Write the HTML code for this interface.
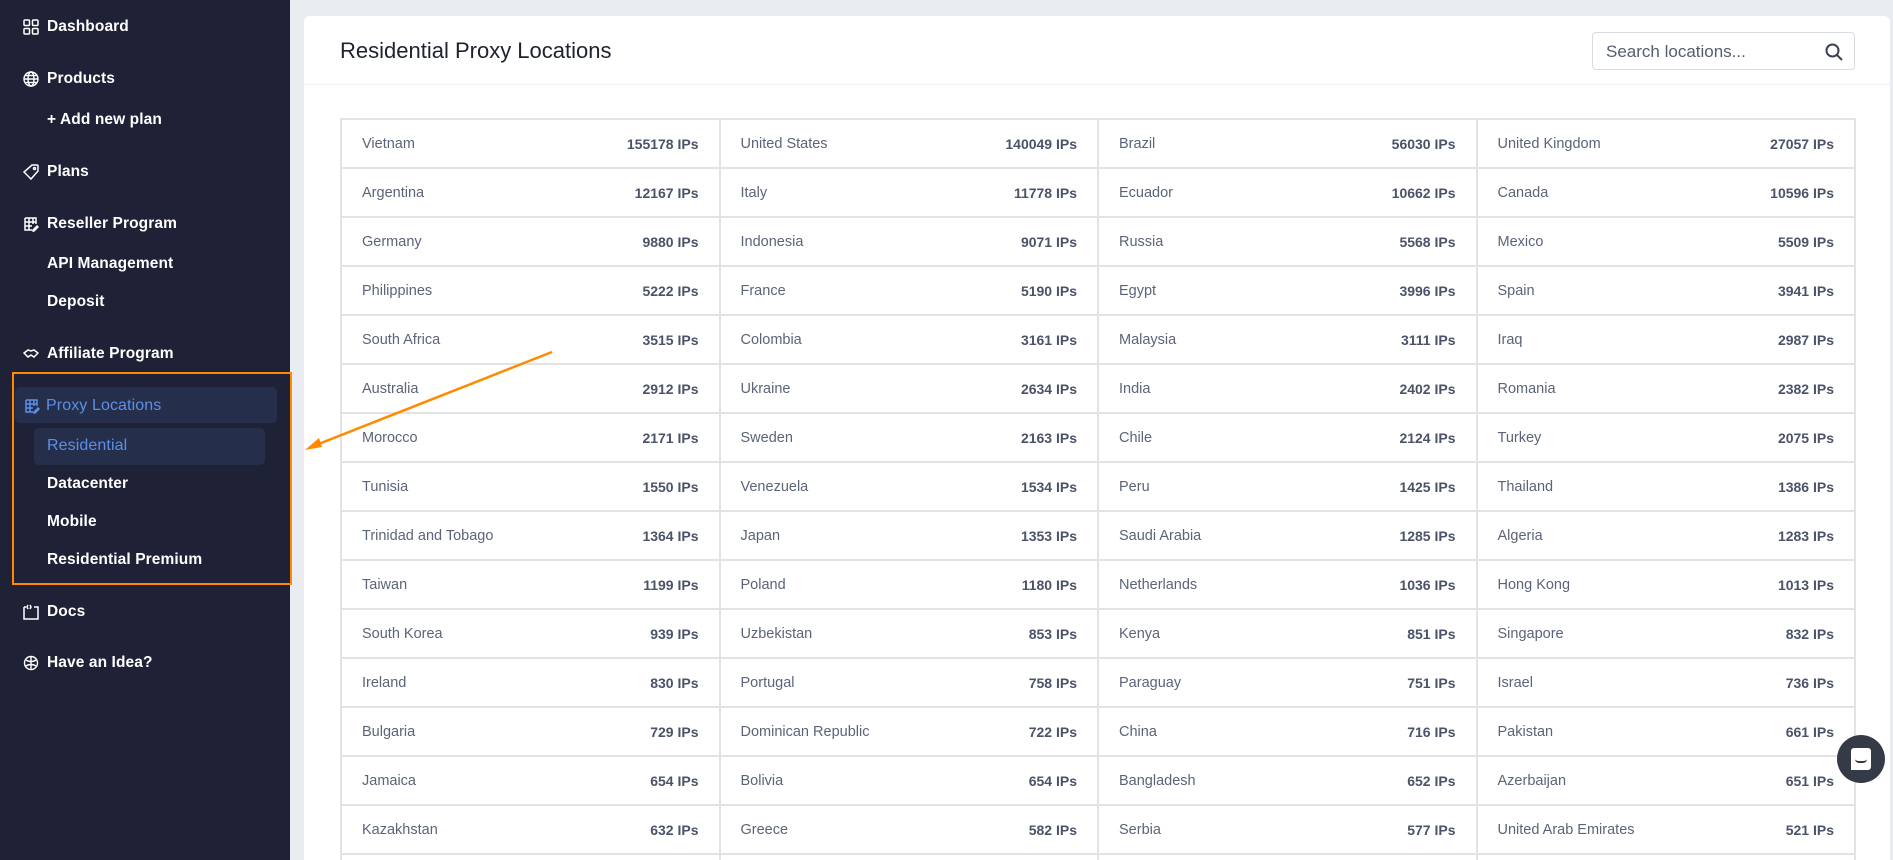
<!DOCTYPE html>
<html style="width:1893px;height:860px;overflow:hidden"><head><meta charset="utf-8"><style>
*{margin:0;padding:0;box-sizing:border-box}
body{width:1893px;height:860px;overflow:hidden;background:#e9ecf0;font-family:"Liberation Sans",sans-serif;position:relative}
.side{position:absolute;left:0;top:0;width:290px;height:860px;background:#1f2236}
.it{position:absolute;left:47px;color:#fff;font-size:15.5px;font-weight:bold;letter-spacing:0.1px;line-height:20px}
.ic{position:absolute;left:23px;width:16px;height:16px}
.card{position:absolute;left:304px;top:16px;width:1586px;height:844px;background:#fff;border-radius:6px 6px 0 0;overflow:hidden}
.hdr{position:absolute;left:0;top:0;width:100%;height:69px;border-bottom:1px solid #eef0f2}
.title{position:absolute;left:36px;top:22px;font-size:22px;color:#1e2230}
.search{position:absolute;left:1288px;top:16px;width:263px;height:38px;border:1px solid #d9dce1;border-radius:4px;font-size:17px;color:#555d6e;padding:9px 0 0 13px}
table{position:absolute;left:36px;top:102px;border-collapse:collapse;table-layout:fixed;width:1514px}
td{border:2px solid #e3e3e3;height:49px;width:378.5px;padding:0 20px;font-size:14.5px;color:#5b6478}
td div{display:flex;justify-content:space-between;align-items:center}
td b{color:#4a5368;font-size:14px}
</style></head><body>
<div class="side">
<svg class="ic" style="top:19px" viewBox="0 0 16 16" fill="none" stroke="#fff" stroke-width="1.5"><rect x="1" y="1" width="5.5" height="5.5" rx="1"/><rect x="9.5" y="1" width="5.5" height="5.5" rx="1"/><rect x="1" y="9.5" width="5.5" height="5.5" rx="1"/><rect x="9.5" y="9.5" width="5.5" height="5.5" rx="1"/></svg>
<div class="it" style="top:17px">Dashboard</div>
<svg class="ic" style="top:71px" viewBox="0 0 16 16" fill="none" stroke="#fff" stroke-width="1.4"><circle cx="8" cy="8" r="7"/><ellipse cx="8" cy="8" rx="3" ry="7"/><path d="M1 8h14M2 4.5h12M2 11.5h12"/></svg>
<div class="it" style="top:69px">Products</div>
<div class="it" style="top:110px">+ Add new plan</div>
<svg class="ic" style="top:164px" viewBox="0 0 16 16" fill="none" stroke="#fff" stroke-width="1.5"><path d="M9 1h5a1 1 0 0 1 1 1v5L8 15 1 8z"/><circle cx="11.5" cy="4.5" r="1"/></svg>
<div class="it" style="top:162px">Plans</div>
<svg class="ic" style="top:216px" viewBox="0 0 16 16" fill="none" stroke="#fff" stroke-width="1.5"><path d="M2 2h11v6M2 2v12h7M2 6h11M2 10h7M6 2v12M10 2v6M10 14l4-4 1 1-4 4h-1z"/></svg>
<div class="it" style="top:214px">Reseller Program</div>
<div class="it" style="top:254px">API Management</div>
<div class="it" style="top:292px">Deposit</div>
<svg class="ic" style="top:346px" viewBox="0 0 16 16" fill="none" stroke="#fff" stroke-width="1.5"><path d="M1 7l4-3 3 1 3-1 4 3-4 4-3-2-3 2z"/></svg>
<div class="it" style="top:344px">Affiliate Program</div>
<div style="position:absolute;left:15px;top:387px;width:262px;height:36px;background:#252f4c;border-radius:5px"></div>
<svg class="ic" style="top:398px;left:24px" viewBox="0 0 16 16" fill="none" stroke="#5b8fe6" stroke-width="1.5"><path d="M2 2h11v6M2 2v12h7M2 6h11M2 10h7M6 2v12M10 2v6M10 14l4-4 1 1-4 4h-1z"/></svg>
<div class="it" style="top:396px;left:46px;color:#5b8fe6;font-weight:normal;font-size:16px">Proxy Locations</div>
<div style="position:absolute;left:34px;top:428px;width:231px;height:37px;background:#252f4c;border-radius:5px"></div>
<div class="it" style="top:436px;color:#5b8fe6;font-weight:normal;font-size:16px">Residential</div>
<div class="it" style="top:474px">Datacenter</div>
<div class="it" style="top:512px">Mobile</div>
<div class="it" style="top:550px">Residential Premium</div>
<div style="position:absolute;left:12px;top:372px;width:280px;height:213px;border:2.5px solid #ff8a00"></div>
<svg class="ic" style="top:604px" viewBox="0 0 16 16" fill="none" stroke="#fff" stroke-width="1.5"><path d="M1 3v12h14V3h-4M1 3h2M5 1l-1 2 1 2M7 1l1 2-1 2"/></svg>
<div class="it" style="top:602px">Docs</div>
<svg class="ic" style="top:655px" viewBox="0 0 16 16" fill="none" stroke="#fff" stroke-width="1.4"><circle cx="8" cy="8" r="6.5"/><path d="M8 2v12M3 5c3 2 7 2 10 0M3 11c3-2 7-2 10 0"/></svg>
<div class="it" style="top:653px">Have an Idea?</div>
</div>
<div class="card">
<div class="hdr"><div class="title">Residential Proxy Locations</div>
<div class="search">Search locations...<svg style="position:absolute;right:10px;top:9px" width="20" height="20" viewBox="0 0 20 20" fill="none" stroke="#3b4252" stroke-width="2"><circle cx="8.5" cy="8.5" r="6"/><path d="M13 13l5 5"/></svg></div></div>
<table>
<tr><td><div>Vietnam<b>155178 IPs</b></div></td><td><div>United States<b>140049 IPs</b></div></td><td><div>Brazil<b>56030 IPs</b></div></td><td><div>United Kingdom<b>27057 IPs</b></div></td></tr>
<tr><td><div>Argentina<b>12167 IPs</b></div></td><td><div>Italy<b>11778 IPs</b></div></td><td><div>Ecuador<b>10662 IPs</b></div></td><td><div>Canada<b>10596 IPs</b></div></td></tr>
<tr><td><div>Germany<b>9880 IPs</b></div></td><td><div>Indonesia<b>9071 IPs</b></div></td><td><div>Russia<b>5568 IPs</b></div></td><td><div>Mexico<b>5509 IPs</b></div></td></tr>
<tr><td><div>Philippines<b>5222 IPs</b></div></td><td><div>France<b>5190 IPs</b></div></td><td><div>Egypt<b>3996 IPs</b></div></td><td><div>Spain<b>3941 IPs</b></div></td></tr>
<tr><td><div>South Africa<b>3515 IPs</b></div></td><td><div>Colombia<b>3161 IPs</b></div></td><td><div>Malaysia<b>3111 IPs</b></div></td><td><div>Iraq<b>2987 IPs</b></div></td></tr>
<tr><td><div>Australia<b>2912 IPs</b></div></td><td><div>Ukraine<b>2634 IPs</b></div></td><td><div>India<b>2402 IPs</b></div></td><td><div>Romania<b>2382 IPs</b></div></td></tr>
<tr><td><div>Morocco<b>2171 IPs</b></div></td><td><div>Sweden<b>2163 IPs</b></div></td><td><div>Chile<b>2124 IPs</b></div></td><td><div>Turkey<b>2075 IPs</b></div></td></tr>
<tr><td><div>Tunisia<b>1550 IPs</b></div></td><td><div>Venezuela<b>1534 IPs</b></div></td><td><div>Peru<b>1425 IPs</b></div></td><td><div>Thailand<b>1386 IPs</b></div></td></tr>
<tr><td><div>Trinidad and Tobago<b>1364 IPs</b></div></td><td><div>Japan<b>1353 IPs</b></div></td><td><div>Saudi Arabia<b>1285 IPs</b></div></td><td><div>Algeria<b>1283 IPs</b></div></td></tr>
<tr><td><div>Taiwan<b>1199 IPs</b></div></td><td><div>Poland<b>1180 IPs</b></div></td><td><div>Netherlands<b>1036 IPs</b></div></td><td><div>Hong Kong<b>1013 IPs</b></div></td></tr>
<tr><td><div>South Korea<b>939 IPs</b></div></td><td><div>Uzbekistan<b>853 IPs</b></div></td><td><div>Kenya<b>851 IPs</b></div></td><td><div>Singapore<b>832 IPs</b></div></td></tr>
<tr><td><div>Ireland<b>830 IPs</b></div></td><td><div>Portugal<b>758 IPs</b></div></td><td><div>Paraguay<b>751 IPs</b></div></td><td><div>Israel<b>736 IPs</b></div></td></tr>
<tr><td><div>Bulgaria<b>729 IPs</b></div></td><td><div>Dominican Republic<b>722 IPs</b></div></td><td><div>China<b>716 IPs</b></div></td><td><div>Pakistan<b>661 IPs</b></div></td></tr>
<tr><td><div>Jamaica<b>654 IPs</b></div></td><td><div>Bolivia<b>654 IPs</b></div></td><td><div>Bangladesh<b>652 IPs</b></div></td><td><div>Azerbaijan<b>651 IPs</b></div></td></tr>
<tr><td><div>Kazakhstan<b>632 IPs</b></div></td><td><div>Greece<b>582 IPs</b></div></td><td><div>Serbia<b>577 IPs</b></div></td><td><div>United Arab Emirates<b>521 IPs</b></div></td></tr>
<tr><td>&nbsp;</td><td></td><td></td><td></td></tr>
</table>
</div>
<svg style="position:absolute;left:0;top:0" width="1893" height="860"><line x1="552" y1="352" x2="316" y2="445" stroke="#ff8a00" stroke-width="2.5"/><path d="M305 450l14-12 3 9z" fill="#ff8a00"/></svg>
<div style="position:absolute;left:1837px;top:735px;width:48px;height:48px;border-radius:50%;background:#343a46"><div style="position:absolute;left:14px;top:13px;width:20px;height:22px;background:#fff;border-radius:3px 3px 3px 0"></div><div style="position:absolute;left:18px;top:24px;width:12px;height:4px;border-bottom:2px solid #343a46;border-radius:0 0 6px 6px"></div></div>
</body></html>
